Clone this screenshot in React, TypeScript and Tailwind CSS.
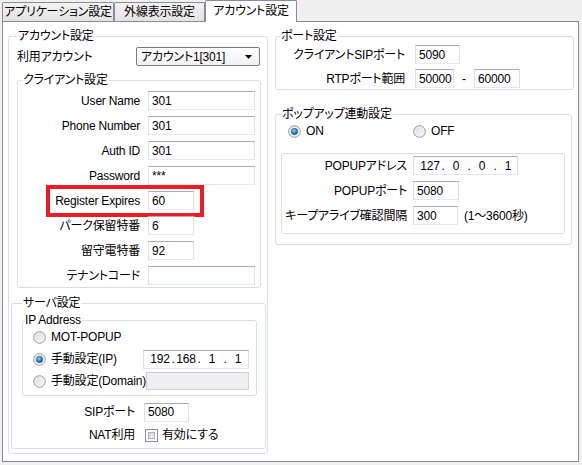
import type { ReactNode } from 'react';

const font =
  "font-['Liberation_Sans','Noto_Sans_CJK_JP',sans-serif] [font-feature-settings:'palt'] text-[12px] leading-[14px] tracking-[-0.2px] text-black";

const boxCls =
  'h-[19px] flex items-center bg-white border border-[#dbdfe6] border-t-[#abadb3] border-b-[#e3e9ef] pl-[3px]';

function TextBox({ value, w }: { value?: string; w: string }) {
  return <div className={`${boxCls} ${w}`}>{value}</div>;
}

function IpBox({ parts, w }: { parts: string[]; w: string }) {
  return (
    <div className={`${boxCls} ${w} pl-[6px]`}>
      {parts.map((p, i) => (
        <span key={i} className="flex items-center">
          <span className="w-[20px] text-center">{p}</span>
          {i < parts.length - 1 && <span className="w-[6px] text-center">.</span>}
        </span>
      ))}
    </div>
  );
}

function Radio({ checked }: { checked?: boolean }) {
  return (
    <svg width="13" height="13" viewBox="0 0 13 13" className="shrink-0">
      <defs>
        <linearGradient id="rg" x1="0" y1="0" x2="1" y2="1">
          <stop offset="0" stopColor="#d9d9d9" />
          <stop offset="1" stopColor="#fbfbfb" />
        </linearGradient>
        <radialGradient id="rb" cx="0.4" cy="0.35" r="0.7">
          <stop offset="0" stopColor="#9fd6f7" />
          <stop offset="0.5" stopColor="#2a8ad4" />
          <stop offset="1" stopColor="#16507f" />
        </radialGradient>
      </defs>
      <circle cx="6.5" cy="6.5" r="5.8" fill="url(#rg)" stroke="#8e8f8f" strokeWidth="0.9" />
      <circle cx="6.5" cy="6.5" r="4.4" fill="none" stroke="#f4f4f4" strokeWidth="0.8" />
      {checked && <circle cx="6.5" cy="6.5" r="3.2" fill="url(#rb)" stroke="#1d4f76" strokeWidth="0.5" />}
    </svg>
  );
}

function CheckBox() {
  return (
    <div className="w-[13px] h-[13px] border border-[#8e8f8f] bg-white p-[2px] shrink-0">
      <div className="w-full h-full border border-[#aeb3b9] bg-gradient-to-br from-[#cbcfd5] to-[#f6f6f6]" />
    </div>
  );
}

function Group({ title, className, legendCls, children }: { title: string; className: string; legendCls: string; children: ReactNode }) {
  return (
    <fieldset className={`border border-[#d5dfe5] rounded-[3px] ${className}`}>
      <legend className={`px-[1px] ${legendCls}`}>{title}</legend>
      {children}
    </fieldset>
  );
}

function Row({ label, lw, gap, children }: { label: string; lw: string; gap: string; children: ReactNode }) {
  return (
    <div className="flex items-center h-[19px]">
      <div className={`${lw} text-right shrink-0 whitespace-nowrap`}>{label}</div>
      <div className={`${gap} flex items-center`}>{children}</div>
    </div>
  );
}

const clientRows = [
  { label: 'User Name', value: '301', w: 'w-[107px]' },
  { label: 'Phone Number', value: '301', w: 'w-[107px]' },
  { label: 'Auth ID', value: '301', w: 'w-[107px]' },
  { label: 'Password', value: '***', w: 'w-[107px]' },
  { label: 'Register Expires', value: '60', w: 'w-[46px]', mark: true },
  { label: 'パーク保留特番', value: '6', w: 'w-[46px]' },
  { label: '留守電特番', value: '92', w: 'w-[46px]' },
  { label: 'テナントコード', value: '', w: 'w-[107px]' },
];

export default function App() {
  return (
    <div className={`w-[582px] h-[465px] bg-[#f0f0f0] overflow-hidden ${font}`}>
      {/* tabs */}
      <div className="h-[21px] flex items-end pl-[2px]">
        <div className="h-[19px] w-[112px] border border-b-0 border-[#898c95] rounded-t-[2px] bg-gradient-to-b from-[#f3f3f3] to-[#e3e3e3] flex items-center justify-center whitespace-nowrap">
          アプリケーション設定
        </div>
        <div className="h-[19px] w-[91px] border border-b-0 border-[#898c95] rounded-t-[2px] bg-gradient-to-b from-[#f3f3f3] to-[#e3e3e3] flex items-center justify-center">
          外線表示設定
        </div>
        <div className="relative z-10 -mb-px h-[22px] w-[92px] border border-b-0 border-[#898c95] rounded-t-[2px] bg-white flex items-start pt-[3px] justify-center">
          アカウント設定
        </div>
      </div>

      {/* panel */}
      <div className="ml-[2px] w-[577px] h-[441px] border border-[#898c95] bg-white flex items-start">
        {/* left */}
        <Group title="アカウント設定" className="ml-[5px] mt-[7px] w-[260px] h-[425px]" legendCls="ml-[8px]">
          <div className="mt-[4px] flex items-center h-[19px]">
            <div className="pl-[8px] w-[127px] shrink-0">利用アカウント</div>
            <div className="w-[124px] h-[19px] border border-[#7a7a7a] rounded-[2px] bg-gradient-to-b from-white to-[#f1f1f1] flex items-center pl-[4px] pr-[7px]">
              <span className="flex-1">アカウント1[301]</span>
              <svg width="7" height="4" viewBox="0 0 7 4">
                <path d="M0 0h7L3.5 4z" fill="#000" />
              </svg>
            </div>
          </div>

          <Group title="クライアント設定" className="ml-[8px] mt-[7px] w-[244px] h-[215px]" legendCls="ml-[4px]">
            <div className="mt-[4px] flex flex-col gap-[6px]">
              {clientRows.map(r => (
                <div key={r.label} className="relative">
                  <Row label={r.label} lw="w-[122px]" gap="ml-[8px]">
                    <TextBox value={r.value} w={r.w} />
                  </Row>
                  {r.mark && (
                    <div className="absolute left-[28px] top-[-6px] w-[158px] h-[32px] border-[4px] border-[#ed1c24]" />
                  )}
                </div>
              ))}
            </div>
          </Group>

          <Group title="サーバ設定" className="ml-[2px] mt-[8px] w-[255px] h-[153px]" legendCls="ml-[10px]">
            <Group title="IP Address" className="ml-[10px] mt-[3px] w-[235px] h-[83px]" legendCls="ml-[1px]">
              <div className="flex flex-col gap-[2px]">
                <div className="h-[20px] flex items-center pl-[10px]">
                  <Radio />
                  <span className="ml-[5px]">MOT-POPUP</span>
                </div>
                <div className="h-[20px] flex items-center pl-[10px]">
                  <Radio checked />
                  <span className="ml-[5px]">手動設定(IP)</span>
                  <div className="ml-auto mr-[7px]">
                    <IpBox parts={['192', '168', '1', '1']} w="w-[106px]" />
                  </div>
                </div>
                <div className="h-[20px] flex items-center pl-[10px]">
                  <Radio />
                  <span className="ml-[5px] whitespace-nowrap">手動設定(Domain)</span>
                  <div className="ml-auto mr-[7px] w-[103px] h-[18px] border border-[#cfd3d8] bg-[#f0f0f0]" />
                </div>
              </div>
            </Group>
            <div className="mt-[6px] flex items-center h-[20px]">
              <div className="w-[123px] text-right">SIPポート</div>
              <div className="ml-[9px]">
                <TextBox value="5080" w="w-[45px]" />
              </div>
            </div>
            <div className="mt-[3px] flex items-center h-[20px]">
              <div className="w-[123px] text-right">NAT利用</div>
              <div className="ml-[10px]">
                <CheckBox />
              </div>
              <span className="ml-[4px]">有効にする</span>
            </div>
          </Group>
        </Group>

        {/* right */}
        <div className="ml-[7px]">
          <Group title="ポート設定" className="mt-[7px] w-[299px] h-[61px]" legendCls="ml-[4px]">
            <div className="mt-[2px] flex flex-col gap-[5px]">
              <Row label="クライアントSIPポート" lw="w-[129px]" gap="ml-[10px]">
                <TextBox value="5090" w="w-[45px]" />
              </Row>
              <Row label="RTPポート範囲" lw="w-[129px]" gap="ml-[10px]">
                <TextBox value="50000" w="w-[39px]" />
                <span className="w-[20px] text-center">-</span>
                <TextBox value="60000" w="w-[46px]" />
              </Row>
            </div>
          </Group>

          <Group title="ポップアップ連動設定" className="mt-[17px] w-[297px] h-[138px]" legendCls="ml-[5px]">
            <div className="h-[20px] flex items-center pl-[12px]">
              <div className="w-[125px] flex items-center">
                <Radio checked />
                <span className="ml-[5px]">ON</span>
              </div>
              <div className="flex items-center">
                <Radio />
                <span className="ml-[5px]">OFF</span>
              </div>
            </div>
            <div className="ml-[5px] mt-[12px] w-[284px] h-[81px] border border-[#d5dfe5] rounded-[3px]">
              <div className="mt-[2px] flex flex-col gap-[6px]">
                <Row label="POPUPアドレス" lw="w-[125px]" gap="ml-[6px]">
                  <IpBox parts={['127', '0', '0', '1']} w="w-[105px]" />
                </Row>
                <Row label="POPUPポート" lw="w-[125px]" gap="ml-[6px]">
                  <TextBox value="5080" w="w-[46px]" />
                </Row>
                <Row label="キープアライブ確認間隔" lw="w-[125px]" gap="ml-[6px]">
                  <TextBox value="300" w="w-[45px]" />
                  <span className="ml-[6px]">(1～3600秒)</span>
                </Row>
              </div>
            </div>
          </Group>
        </div>
      </div>
    </div>
  );
}
